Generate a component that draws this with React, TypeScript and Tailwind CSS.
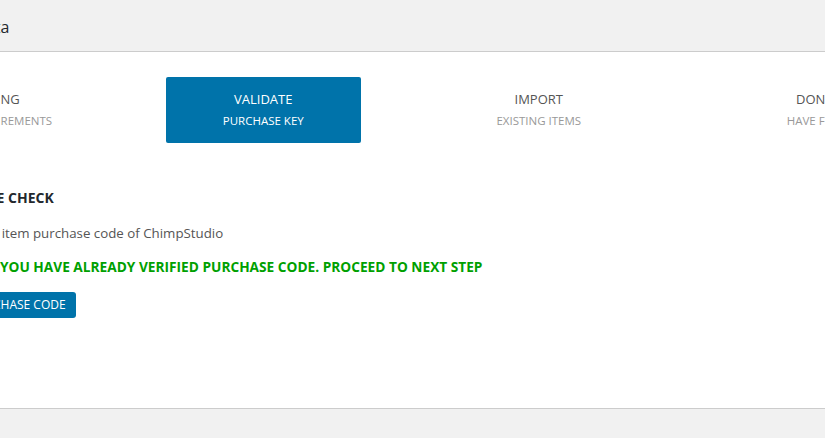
const steps = [
  { title: 'CHECKING', sub: 'SERVER REQUIREMENTS', active: false },
  { title: 'VALIDATE', sub: 'PURCHASE KEY', active: true },
  { title: 'IMPORT', sub: 'EXISTING ITEMS', active: false },
  { title: 'DONE', sub: 'HAVE FUN', active: false },
]

export default function App() {
  return (
    <div
      className="h-[438px] w-[825px] overflow-hidden bg-[#f1f1f1] text-[#23282d]"
      style={{ fontFamily: '"Open Sans", "Liberation Sans", sans-serif' }}
    >
      <div className="flex h-[52px] items-center border-b border-[#ccc] pt-[2px]">
        <h1 className="ml-[-130px] whitespace-nowrap text-[16px]">Import Demo Data</h1>
      </div>
      <div className="h-[357px] border-b border-[#ccc] bg-white">
        <div className="ml-[-150px] grid w-[1102px] grid-cols-4 pt-[25px]">
          {steps.map((s) => (
            <div key={s.title} className="flex justify-center">
              <div
                className={
                  s.active
                    ? 'flex h-[66px] w-[195px] flex-col items-center justify-center gap-[5px] rounded-[2px] bg-[#0073aa] pb-[2px] text-white'
                    : 'flex h-[66px] w-[195px] flex-col items-center justify-center gap-[5px] pb-[2px]'
                }
              >
                <span className={s.active ? 'text-[13px] leading-[18px]' : 'text-[13px] leading-[18px] text-[#555]'}>
                  {s.title}
                </span>
                <span
                  className={
                    s.active
                      ? 'whitespace-nowrap text-[11.5px] leading-[16px]'
                      : 'whitespace-nowrap text-[11.5px] leading-[16px] text-[#999]'
                  }
                >
                  {s.sub}
                </span>
              </div>
            </div>
          ))}
        </div>
        <div className="mt-[46px] flex flex-col items-start whitespace-nowrap">
          <h2 className="ml-[-111px] text-[14px] font-bold leading-[18px]">PURCHASE CODE CHECK</h2>
          <p className="ml-[-35px] mt-[17px] text-[13.3px] leading-[18px] text-[#555]">
            Enter item purchase code of ChimpStudio
          </p>
          <p className="mt-[16px] text-[13.7px] font-bold leading-[18px] text-[#00a000]">
            YOU HAVE ALREADY VERIFIED PURCHASE CODE. PROCEED TO NEXT STEP
          </p>
          <button className="ml-[-81px] mt-[16px] h-[26px] rounded-[3px] bg-[#0073aa] px-[10px] text-[12px] text-white">
            VERIFY PURCHASE CODE
          </button>
        </div>
      </div>
    </div>
  )
}
